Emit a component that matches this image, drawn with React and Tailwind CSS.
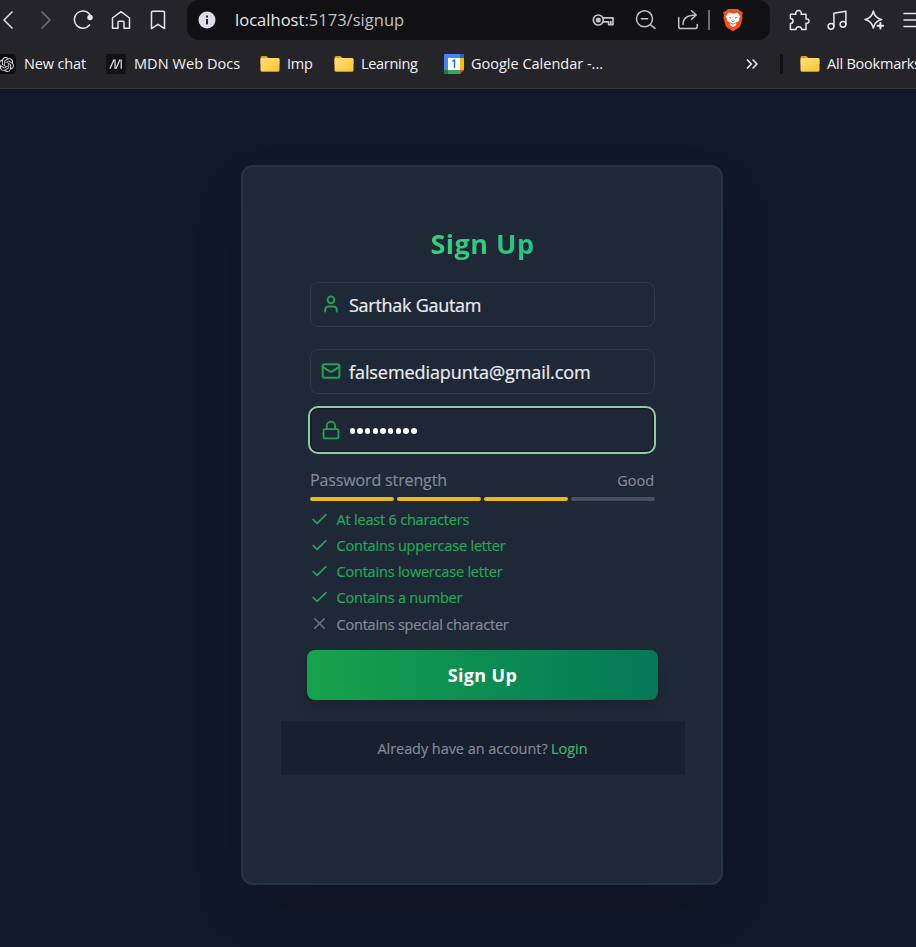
import React from 'react';
import { User, Mail, Lock, Check, X } from 'lucide-react';
import { SiOpenai } from 'react-icons/si';

function Glyph({ children, className = '' }) {
  return (
    <svg
      width="24"
      height="24"
      viewBox="0 0 24 24"
      fill="none"
      stroke="currentColor"
      strokeWidth="1.5"
      strokeLinecap="round"
      strokeLinejoin="round"
      className={`block shrink-0 ${className}`}
    >
      {children}
    </svg>
  );
}

function Cell({ children, className = '' }) {
  return <div className={`flex h-10 w-[37.6px] shrink-0 items-center justify-center ${className}`}>{children}</div>;
}

function Folder() {
  return (
    <svg width="20" height="20" viewBox="0 0 20 20" className="block shrink-0">
      <defs>
        <linearGradient id="folder" x1="0" y1="0" x2="1" y2="1">
          <stop offset="0" stopColor="#ffdf7c" />
          <stop offset="1" stopColor="#fbc52f" />
        </linearGradient>
      </defs>
      <path d="M0.5 3.5Q0.5 2 2 2H6.5L8.5 4H18Q19.5 4 19.5 5.5V10H0.5Z" fill="#dc9c14" />
      <rect x="0.5" y="4" width="19" height="13.6" rx="1.5" fill="url(#folder)" />
      <path d="M1 17.3H19" stroke="#e0a823" strokeWidth="0.8" />
    </svg>
  );
}

function AddressBar() {
  return (
    <div className="flex h-10 w-[583px] shrink-0 items-center rounded-xl bg-[#111113]">
      <svg width="18" height="18" viewBox="0 0 18 18" className="ml-[11px] shrink-0">
        <circle cx="9" cy="9" r="8.5" fill="#dfdee6" />
        <rect x="8" y="4.5" width="2" height="2" fill="#252429" />
        <rect x="8" y="8" width="2" height="5.4" fill="#252429" />
      </svg>
      <div className="ml-[19px] w-[346px] text-[16.5px] leading-10 tracking-[0.03px] text-[#c2c2c8]">
        <span className="text-[#e8e8ec]">localhost</span>:5173/signup
      </div>
      <Glyph className="ml-[10px] text-[#c3c3c8]">
        <circle cx="7.3" cy="12" r="5" strokeWidth="1.7" />
        <circle cx="7.3" cy="12" r="1.8" fill="currentColor" />
        <path d="M12 9.9H22V16.6H17.6V13.9H12" strokeWidth="1.7" />
        <path d="M19.8 13.5V16.5" strokeWidth="1.7" />
      </Glyph>
      <Glyph className="ml-[19px] text-[#c3c3c8]">
        <circle cx="10.5" cy="10.8" r="8" />
        <path d="M7.3 10.8H13.7M16.3 16.6L21 20.4" />
      </Glyph>
      <Glyph className="ml-[18px] text-[#c3c3c8]">
        <path d="M2.7 9.5V18.5Q2.7 20.6 4.8 20.6H19.2Q21.2 20.6 21.2 18.5V16.5" />
        <path d="M7 16.5C7 10 12 7 20 7M15.6 2.8L20.2 7L15.6 11.2" />
      </Glyph>
      <div className="ml-[8px] h-5 w-[1.5px] bg-[#6a6a70]" />
      <svg width="22" height="24" viewBox="0 0 22 24" className="ml-[12px] shrink-0">
        <path d="M6 1H16L18.5 3.2L20.8 4L20 8L20.6 9.8L18.2 18Q17.6 19.7 11 23.3Q4.4 19.7 3.8 18L1.4 9.8L2 8L1.2 4L3.5 3.2Z" fill="#fb4f14" />
        <path d="M6.6 4.6L11 5.6L15.4 4.6L18.4 8.4L17 10.8L17.2 12.6L13.9 14.8L14.2 17L11 19.2L7.8 17L8.1 14.8L4.8 12.6L5 10.8L3.6 8.4Z" fill="#fff" />
        <path d="M6 8.8L9.4 9.4L8.8 10.8ZM16 8.8L12.6 9.4L13.2 10.8Z" fill="#fb4f14" />
        <path d="M9.6 12.8L11 14L12.4 12.8M8 14.8L11 16.2L14 14.8" fill="none" stroke="#fb4f14" strokeWidth="0.9" />
      </svg>
    </div>
  );
}

function Toolbar() {
  return (
    <div className="flex h-10 overflow-hidden text-[#e6e6ea]">
      <div className="-ml-[10.8px] flex w-[197.8px] shrink-0">
        <Cell>
          <Glyph><path d="M16 4L8 12L16 20" /></Glyph>
        </Cell>
        <Cell className="text-[#77777b]">
          <Glyph><path d="M8 4L16 12L8 20" /></Glyph>
        </Cell>
        <Cell>
          <Glyph>
            <path d="M18.6 17A8.6 8.6 0 1 1 18.6 6.2L20 9.3" />
            <circle cx="19" cy="9.5" r="2" fill="currentColor" />
          </Glyph>
        </Cell>
        <Cell>
          <Glyph>
            <path d="M3.5 10L12 3.7L20.5 10V20.2H15V14.4Q15 13.3 14 13.3H10Q9 13.3 9 14.4V20.2H3.5Z" />
          </Glyph>
        </Cell>
        <Cell>
          <Glyph>
            <path d="M5.5 4.5Q5.5 3.2 6.8 3.2H17.2Q18.5 3.2 18.5 4.5V20.6L12 16.3L5.5 20.6Z" />
          </Glyph>
        </Cell>
      </div>
      <AddressBar />
      <div className="ml-[10.5px] flex shrink-0">
        <Cell>
          <Glyph>
            <path d="M3.4 6.2H8.9C8.1 4.1 9.6 2.6 11.5 2.6S14.9 4.1 14.1 6.2H19V11.1C20.6 10.7 22 11.7 22 13.2S20.6 15.7 19 15.3V21.4H14.7C14.7 17.7 8.9 17.7 8.9 21.4H3.4V15.5C6.9 15.5 6.9 10.5 3.4 10.5Z" />
          </Glyph>
        </Cell>
        <Cell>
          <Glyph>
            <circle cx="6" cy="18.3" r="2.9" />
            <circle cx="18" cy="16.3" r="2.9" />
            <path d="M8.9 18.3V5.3L20.9 3.2V16.3" />
          </Glyph>
        </Cell>
        <Cell>
          <Glyph>
            <path d="M11.3 3C12.4 8 14.5 10.5 19.6 11.5C14.5 12.7 12.4 15 11.3 20C10.2 15 8.1 12.7 3 11.5C8.1 10.5 10.2 8 11.3 3Z" />
            <path d="M18.4 15V20.6M15.6 17.8H21.2" strokeWidth="2" />
          </Glyph>
        </Cell>
        <Cell>
          <Glyph><path d="M4 5.5H24M4 12H24M4 18.5H24" /></Glyph>
        </Cell>
      </div>
    </div>
  );
}

function Bookmarks() {
  return (
    <div className="flex h-12 items-center overflow-hidden whitespace-nowrap text-[14.5px] text-[#f3f3f5]">
      <div className="-ml-[4px] flex size-5 shrink-0 items-center justify-center rounded bg-[#0d0d0e]">
        <SiOpenai size={15} color="#dedee0" />
      </div>
      <span className="ml-2 w-[82px] shrink-0 tracking-[-0.15px]">New chat</span>
      <svg width="20" height="20" viewBox="0 0 20 20" className="shrink-0">
        <rect width="20" height="20" fill="#131316" />
        <path d="M4 14.8L8 5.5M9 5.5V14.8M10 14.8L14 5.5M15.2 5.5V14.8" fill="none" stroke="#e8e8ea" strokeWidth="1.2" />
      </svg>
      <span className="ml-2 w-[126px] shrink-0 tracking-[0.06px]">MDN Web Docs</span>
      <Folder />
      <span className="ml-[7px] w-[47px] shrink-0 tracking-[-0.2px]">Imp</span>
      <Folder />
      <span className="ml-[7px] w-[83px] shrink-0 tracking-[-0.3px]">Learning</span>
      <svg width="20" height="20" viewBox="0 0 20 20" className="shrink-0">
        <rect width="20" height="20" rx="1" fill="#4285f4" />
        <rect x="16" y="4" width="4" height="12" fill="#fbbc04" />
        <rect x="16" width="4" height="4" fill="#1967d2" />
        <rect y="16" width="16" height="4" fill="#34a853" />
        <rect y="16" width="4" height="4" fill="#188038" />
        <rect x="4" y="4" width="12" height="12" fill="#fff" />
        <path d="M16 16H20L16 20Z" fill="#ea4335" />
        <path d="M20 16V20H16Z" fill="#252429" />
        <path d="M8.2 7.3L10.5 6V14" fill="none" stroke="#1a73e8" strokeWidth="1.5" />
      </svg>
      <span className="ml-[7px] w-[276px] shrink-0 tracking-[0px]">Google Calendar -...</span>
      <svg width="12" height="12" viewBox="0 0 12 12" fill="none" stroke="#e6e6ea" strokeWidth="1.6" className="-ml-px shrink-0">
        <path d="M1 1.5L5.3 6L1 10.5M6.6 1.5L10.9 6L6.6 10.5" />
      </svg>
      <div className="ml-[22px] mr-[17px] h-5 w-[3px] shrink-0 rounded bg-[#111113]" />
      <Folder />
      <span className="ml-[7px] tracking-[-0.22px]">All Bookmarks</span>
    </div>
  );
}

function Field({ icon: Icon, value, tracking }) {
  return (
    <div className="flex h-[45px] items-center rounded-lg border-[1.5px] border-[#2f3948] bg-[#1f2836] pl-[10px]">
      <Icon size={20} strokeWidth={2.4} className="-mt-px shrink-0 text-[#22a053]" />
      <span className={`ml-[8px] mt-[2px] text-[18px] text-[#eceef0] [-webkit-text-stroke:0.2px] ${tracking}`}>{value}</span>
    </div>
  );
}

const rules = [
  { label: 'At least 6 characters', met: true },
  { label: 'Contains uppercase letter', met: true },
  { label: 'Contains lowercase letter', met: true },
  { label: 'Contains a number', met: true },
  { label: 'Contains special character', met: false },
];

export default function App() {
  return (
    <div className="flex h-[947px] w-[916px] flex-col overflow-hidden bg-[#111827] font-['Open_Sans','Noto_Sans',sans-serif]">
      <header className="h-[89px] shrink-0 border-b border-[#343438] bg-[#252429]">
        <Toolbar />
        <Bookmarks />
      </header>

      <main className="flex flex-1 flex-col items-start pl-[241px] pt-[76px]">
        <section className="h-[720px] w-[482px] rounded-xl border-2 border-[#283342] bg-[#1f2836] pl-[67px] pr-[66px] pt-[60px] shadow-2xl">
          <h1 className="mx-auto w-fit bg-gradient-to-r from-[#35d27c] to-[#25c384] bg-clip-text text-[27px] font-bold leading-[34px] tracking-[0.5px] text-transparent">
            Sign Up
          </h1>
          <div className="mt-[21px]">
            <Field icon={User} value="Sarthak Gautam" tracking="tracking-[-0.27px]" />
          </div>
          <div className="mt-[22px]">
            <Field icon={Mail} value="falsemediapunta@gmail.com" tracking="tracking-[-0.08px]" />
          </div>

          <div className="-ml-[2px] -mr-px mt-[12px] flex h-12 items-center rounded-[10px] border-2 border-[#91cba5] bg-[#1f2736] pl-[11px] shadow-[inset_0_0_0_1.5px_#16191e]">
            <Lock size={20} strokeWidth={2.2} className="shrink-0 text-[#22a053]" />
            <div className="ml-[8.5px] mt-[2px] flex gap-[2.2px]">
              {Array.from({ length: 9 }, (_, i) => (
                <span key={i} className="size-[5.5px] rounded-full bg-white" />
              ))}
            </div>
          </div>

          <div className="mt-[14px] flex h-6 items-center justify-between pr-px text-[#858c98]">
            <span className="text-[16px] tracking-[-0.13px] [-webkit-text-stroke:0.15px]">Password strength</span>
            <span className="mt-px text-[14.5px] [-webkit-text-stroke:0.15px]">Good</span>
          </div>
          <div className="mt-[5px] grid grid-cols-4 gap-[3px] pr-[0.5px]">
            <div className="h-1 rounded-full bg-[#eabb12]" />
            <div className="h-1 rounded-full bg-[#eabb12]" />
            <div className="h-1 rounded-full bg-[#eabb12]" />
            <div className="h-1 rounded-full bg-[#49515f]" />
          </div>
          <ul className="mt-[6px]">
            {rules.map(({ label, met }) => (
              <li
                key={label}
                className={`flex h-[26.1px] items-center text-[14.5px] tracking-[-0.2px] [-webkit-text-stroke:0.2px] ${met ? 'text-[#22a957]' : 'text-[#858c98]'}`}
              >
                {met ? (
                  <Check size={19} strokeWidth={2.2} className="-mt-px mr-[7.5px] shrink-0" />
                ) : (
                  <X size={19} strokeWidth={2} className="-mt-px mr-[7.5px] shrink-0 text-[#6b7280]" />
                )}
                {label}
              </li>
            ))}
          </ul>

          <button className="-mx-[3px] mt-[12.5px] block h-[50px] w-[351px] rounded-lg bg-gradient-to-r from-[#16a34a] to-[#047857] pt-[2px] text-[18px] font-bold tracking-[0.35px] text-white shadow-lg">
            Sign Up
          </button>
          <div className="-ml-[29px] -mr-[30px] mt-[21px] flex h-[54px] items-center justify-center gap-[3.5px] bg-[#181f2f] pr-px pt-[2px] text-[14.5px] tracking-[-0.06px] text-[#858c98] [-webkit-text-stroke:0.15px]">
            <span>Already have an account?</span>
            <a className="text-[#3fba6d]">Login</a>
          </div>
        </section>
      </main>
    </div>
  );
}
